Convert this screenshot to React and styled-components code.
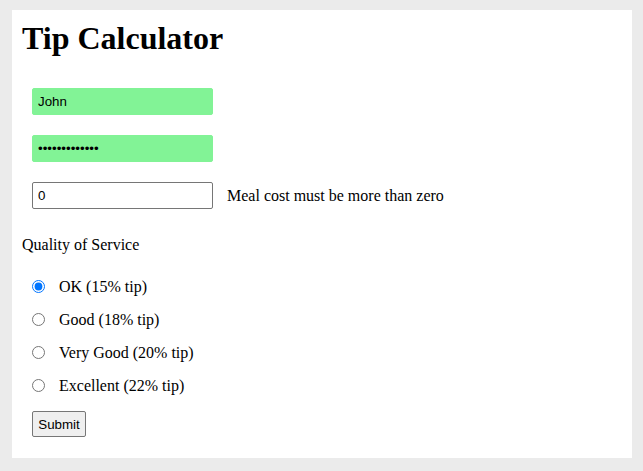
import React from 'react'
import styled, {createGlobalStyle} from 'styled-components'

const GlobalStyle = createGlobalStyle`
  html, body {
    margin: 0;
    padding: 0;
    background: #ebebeb;
  }
  body {
    font-family: "Liberation Serif", "Times New Roman", serif;
    font-size: 16px;
    color: #000;
  }
`

const Page = styled.div`
  padding: 10px 11px 13px 12px;
`

const Panel = styled.div`
  background: #fff;
  height: 448px;
  box-sizing: border-box;
  padding: 10px 10px 21px;
`

const Title = styled.h1`
  margin: 0 0 31px;
  font-size: 32px;
  font-weight: bold;
  line-height: normal;
`

const Form = styled.form`
  display: flex;
  flex-direction: column;
  align-items: flex-start;
`

const Fields = styled.div`
  display: flex;
  flex-direction: column;
  gap: 20px;
  padding-left: 10px;
`

const FieldRow = styled.div`
  display: flex;
  align-items: center;
  gap: 14px;
`

const TextInput = styled.input`
  box-sizing: border-box;
  width: 181px;
  height: 27px;
  margin: 0;
  padding: 0 5px;
  font-family: "Liberation Sans", Arial, sans-serif;
  font-size: 13.33px;
  color: #000;
  border-radius: 2px;
  outline: none;
  background: ${p => (p.$filled ? '#82f396' : '#fff')};
  border: 1px solid ${p => (p.$filled ? '#82f396' : '#767676')};
`

const ErrorText = styled.span`
  font-size: 16px;
`

const SectionLabel = styled.div`
  margin-top: 27px;
  line-height: 18px;
`

const RadioList = styled.div`
  display: flex;
  flex-direction: column;
  margin-top: 16px;
  padding-left: 10px;
`

const RadioRow = styled.label`
  display: flex;
  align-items: center;
  gap: 14px;
  height: 33px;
`

const Radio = styled.input`
  width: 13px;
  height: 13px;
  margin: 0;
`

const SubmitButton = styled.button`
  margin: 9px 0 0 10px;
  box-sizing: border-box;
  width: 54px;
  height: 26px;
  padding: 0;
  font-family: "Liberation Sans", Arial, sans-serif;
  font-size: 13.33px;
  color: #000;
  background: #efefef;
  border: 1px solid #767676;
  border-radius: 2px;
`

const options = [
  {value: 'ok', label: 'OK (15% tip)'},
  {value: 'good', label: 'Good (18% tip)'},
  {value: 'verygood', label: 'Very Good (20% tip)'},
  {value: 'excellent', label: 'Excellent (22% tip)'},
]

export default function App() {
  return (
    <>
      <GlobalStyle />
      <Page>
        <Panel>
          <Title>Tip Calculator</Title>
          <Form onSubmit={e => e.preventDefault()}>
            <Fields>
              <TextInput $filled type="text" defaultValue="John" />
              <TextInput $filled type="password" defaultValue="secretpasswd1" />
              <FieldRow>
                <TextInput type="text" defaultValue="0" />
                <ErrorText>Meal cost must be more than zero</ErrorText>
              </FieldRow>
            </Fields>
            <SectionLabel>Quality of Service</SectionLabel>
            <RadioList>
              {options.map((o, i) => (
                <RadioRow key={o.value}>
                  <Radio
                    type="radio"
                    name="service"
                    value={o.value}
                    defaultChecked={i === 0}
                  />
                  {o.label}
                </RadioRow>
              ))}
            </RadioList>
            <SubmitButton type="submit">Submit</SubmitButton>
          </Form>
        </Panel>
      </Page>
    </>
  )
}
